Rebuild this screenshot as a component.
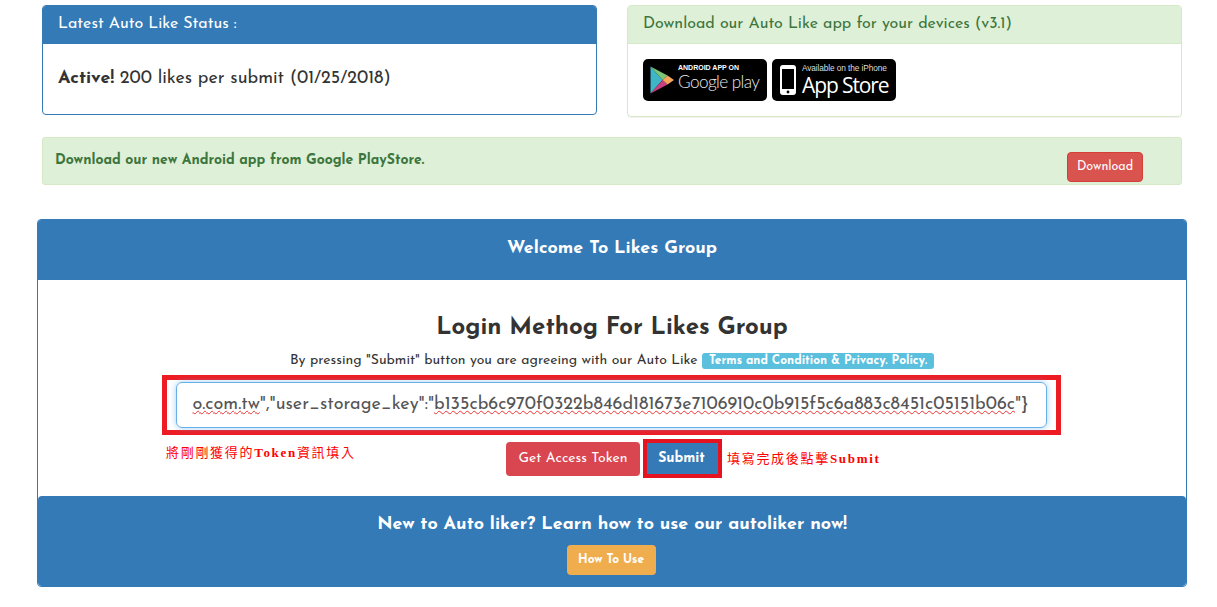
<script>
</script>

<div class="page">
  <div class="row">
    <div class="panel primary">
      <div class="ph">Latest Auto Like Status :</div>
      <div class="pb status"><b>Active!</b> 200 likes per submit (01/25/2018)</div>
    </div>
    <div class="panel success">
      <div class="ph green">Download our Auto Like app for your devices (v3.1)</div>
      <div class="pb badges">
        <div class="badge gp">
          <svg class="play" width="24" height="28" viewBox="0 0 24 28">
            <path d="M0.5 0.5L12.5 14L0.5 27.5Z" fill="#3fb6c8"/>
            <path d="M0.5 0.5L17.5 9.5L12.5 14Z" fill="#7cc576"/>
            <path d="M0.5 27.5L17.5 18.5L12.5 14Z" fill="#c8407e"/>
            <path d="M17.5 9.5L24 14L17.5 18.5L12.5 14Z" fill="#f5a65b"/>
          </svg>
          <div class="bt"><small>ANDROID APP ON</small><span>Google play</span></div>
        </div>
        <div class="badge as">
          <svg class="phone" width="16" height="30" viewBox="0 0 16 30">
            <rect x="0" y="0" width="16" height="30" rx="3" fill="#fff"/>
            <rect x="2" y="4" width="12" height="20" fill="#000"/>
            <circle cx="8" cy="27" r="1.4" fill="#000"/>
          </svg>
          <div class="bt store"><small>Available on the iPhone</small><span>App Store</span></div>
        </div>
      </div>
    </div>
  </div>

  <div class="alert">
    <b>Download our new Android app from Google PlayStore.</b>
    <span class="btn red dl">Download</span>
  </div>

  <div class="card">
    <div class="welcome">Welcome To Likes Group</div>
    <div class="body">
      <h2>Login Methog For Likes Group</h2>
      <p class="agree">By pressing "Submit" button you are agreeing with our Auto Like <span class="label">Terms and Condition &amp; Privacy. Policy.</span></p>
      <div class="redbox">
        <div class="input"><span class="sq">o.com.tw</span>","user_storage_key":"<span class="sq">b135cb6c970f0322b846d181673e7106910c0b915f5c6a883c8451c05151b06c</span>"&#125;</div>
      </div>
      <div class="actions">
        <div class="note left">將剛剛獲得的<b>Token</b>資訊填入</div>
        <span class="btn red big">Get Access Token</span>
        <span class="submitbox"><span class="btn blue">Submit</span></span>
        <div class="note right">填寫完成後點擊<b>Submit</b></div>
      </div>
    </div>
    <div class="foot">
      <div class="ft">New to Auto liker? Learn how to use our autoliker now!</div>
      <span class="btn orange">How To Use</span>
    </div>
  </div>
</div>

<style>
  :global(body) { margin: 0; background: #fff; font-family: "Josefin Sans", "Lato", "Liberation Sans", sans-serif; color: #333; }
  .page { width: 1217px; height: 607px; overflow: hidden; box-sizing: border-box; padding: 5px 30px 0 37px; }
  .row { display: flex; align-items: flex-start; gap: 30px; padding: 0 5px; }
  .panel { border: 1px solid; border-radius: 4px; box-sizing: border-box; overflow: hidden; }
  .primary { width: 555px; height: 110px; border-color: #337ab7; }
  .success { width: 555px; height: 112px; border-color: #d6e9c6; box-shadow: 0 1px 1px rgba(0,0,0,.05); }
  .ph { height: 38px; box-sizing: border-box; padding: 0 15px 2px; display: flex; align-items: center; background: #337ab7; color: #fff; font-size: 16px; border-bottom: 1px solid #337ab7; }
  .ph.green { background: #dff0d8; color: #3c763d; border-bottom-color: #d6e9c6; }
  .pb { padding: 15px; }
  .status { font-size: 18px; padding-top: 26px; }
  .badges { display: flex; gap: 5px; }
  .badge { background: #000; border-radius: 5px; height: 42px; width: 124px; display: flex; align-items: center; color: #fff; box-sizing: border-box; overflow: hidden; }
  .play { margin-left: 7px; flex: none; }
  .phone { margin-left: 8px; flex: none; }
  .bt { display: flex; flex-direction: column; white-space: nowrap; margin-left: 4px; padding-bottom: 6px; }
  .bt small { font-size: 7px; line-height: 8px; font-weight: 700; font-family: "Liberation Sans", sans-serif; }
  .bt span { font-size: 17.2px; line-height: 19px; font-weight: 300; font-family: "Lato", sans-serif; color: #e8e8e8; letter-spacing: -0.6px; }
  .store { margin-left: 6px; padding-bottom: 0; }
  .store small { font-size: 8.3px; line-height: 10px; font-weight: 400; color: #ddd; letter-spacing: -0.1px; }
  .store span { font-size: 21px; line-height: 24px; font-weight: 500; font-family: "Open Sans", sans-serif; color: #fff; letter-spacing: -1.1px; }
  .alert { margin: 20px 5px 0; height: 48px; box-sizing: border-box; background: #dff0d8; border: 1px solid #d6e9c6; border-radius: 3px; color: #3c763d; font-size: 14px; display: flex; justify-content: space-between; align-items: flex-start; padding: 13px 38px 0 12px; }
  .alert b { margin-top: 2px; }
  .btn { display: inline-flex; align-items: center; justify-content: center; border-radius: 4px; color: #fff; box-sizing: border-box; }
  .red { background: #d9464f; }
  .dl { width: 76px; height: 30px; font-size: 12.5px; margin-top: 1px; border: 1px solid #d43f3a; background: #d9534f; }
  .card { margin-top: 34px; width: 1150px; border: 1px solid #337ab7; border-radius: 4px; height: 368px; box-sizing: border-box; display: flex; flex-direction: column; overflow: hidden; }
  .welcome { background: #337ab7; color: #fff; height: 60px; box-sizing: border-box; padding-bottom: 2px; display: flex; align-items: center; justify-content: center; font-weight: 700; font-size: 18px; }
  .body { flex: 1; display: flex; flex-direction: column; align-items: center; }
  h2 { margin: 34px 0 0; font-size: 24px; font-weight: 700; line-height: 28px; }
  .agree { margin: 9px 0 0; font-size: 14px; line-height: 20px; }
  .label { background: #5bc0de; color: #fff; font-weight: 700; font-size: 12px; padding: 2px 7px; border-radius: 3px; }
  .redbox { margin: 4px 2px 0 0; border: 5px solid #ed1c24; width: 899px; height: 60px; box-sizing: border-box; padding: 0 9px; display: flex; align-items: center; }
  .input { flex: 1; border: 1px solid #66afe9; border-radius: 6px; height: 46px; box-sizing: border-box; padding: 0 16px; display: flex; align-items: center; white-space: pre; font-size: 18px; color: #555; box-shadow: 0 0 6px rgba(102,175,233,.6); }
  .sq { text-decoration: underline wavy #e33; text-decoration-thickness: 1px; text-underline-offset: 1px; }
  .actions { position: relative; width: 100%; box-sizing: border-box; padding-left: 4px; display: flex; justify-content: center; align-items: center; margin-top: 4px; gap: 3px; }
  .big { width: 134px; height: 34px; font-size: 14px; }
  .submitbox { border: 4px solid #e5121f; padding: 0; display: inline-flex; }
  .blue { background: #337ab7; font-weight: 700; width: 71px; height: 31px; font-size: 14px; border-radius: 0; padding-right: 2px; }
  .note { position: absolute; color: #f00; font-family: "Liberation Serif", "Noto Sans CJK TC", serif; font-size: 13px; letter-spacing: 1.7px; white-space: nowrap; }
  .left { left: 128px; top: 3px; }
  .right { left: 689px; top: 9px; }
  .foot { background: #337ab7; color: #fff; height: 90px; display: flex; flex-direction: column; align-items: center; border-radius: 4px; }
  .ft { font-size: 18px; font-weight: 700; margin-top: 20px; }
  .orange { background: #f0ad4e; width: 89px; height: 30px; font-size: 12px; font-weight: 700; margin: 11px 2px 0 0; }
</style>
